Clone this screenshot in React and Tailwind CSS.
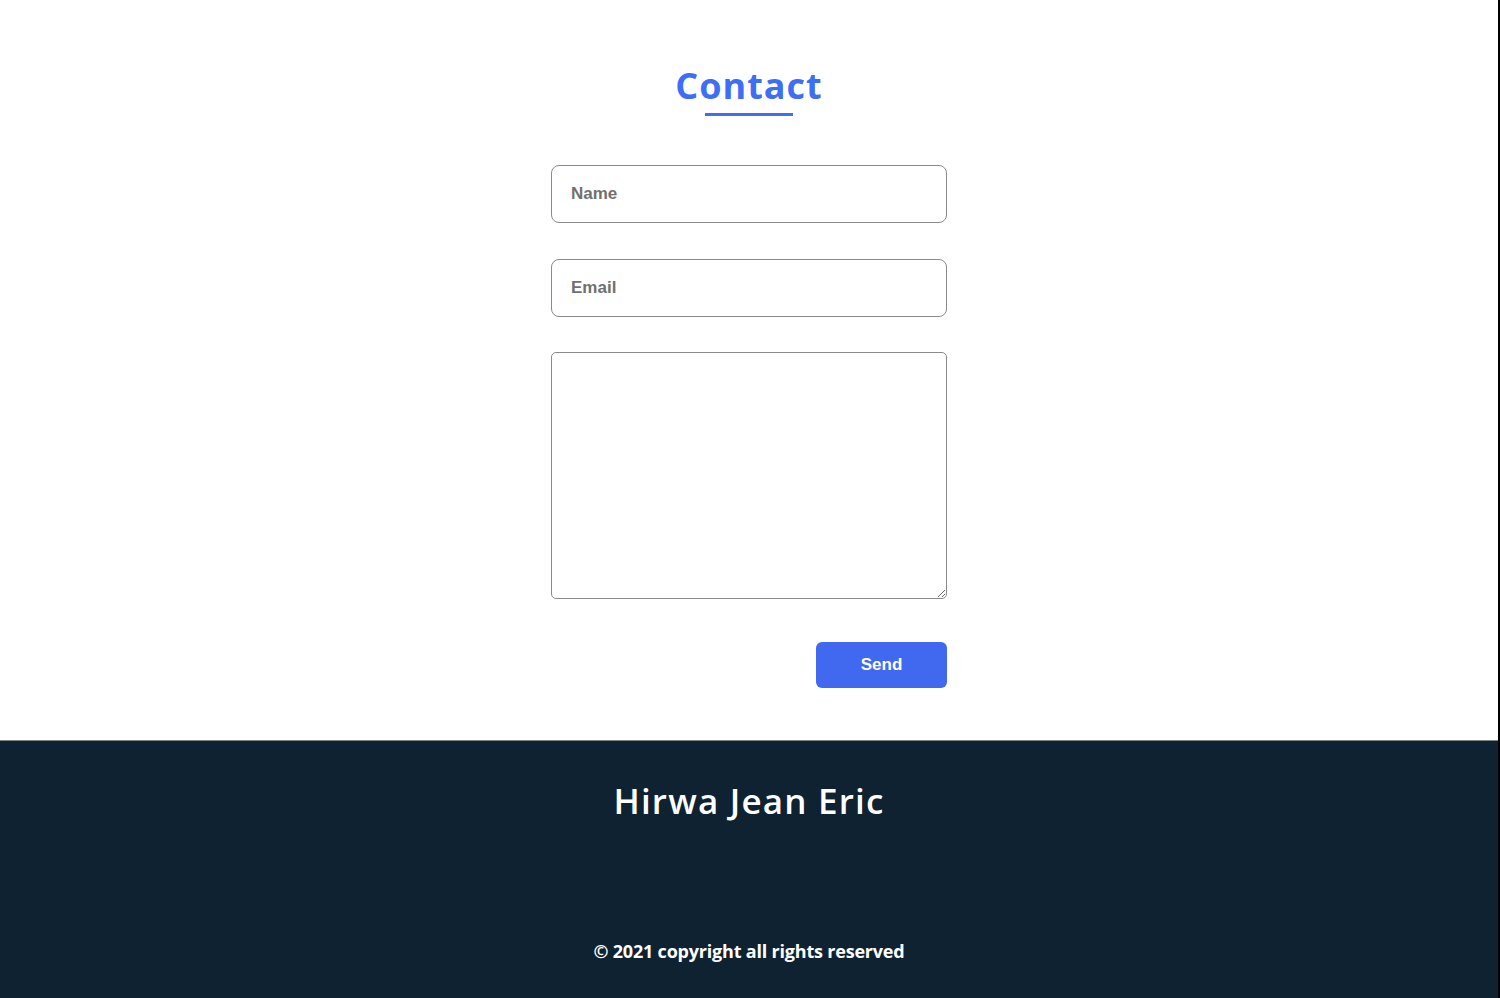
export default function App() {
  return (
    <div className="min-h-[998px] w-full bg-white flex flex-col border-r-2 border-black">
      <section className="flex flex-col items-center pt-[64px] h-[740px]">
        <h1 className="text-[36px] leading-[44px] font-bold text-[#3d6ef5] tracking-[1px]" style={{ fontFamily: '"Open Sans", sans-serif' }}>
          Contact
        </h1>
        <div className="w-[88px] h-[3px] bg-[#3d6ef5] mt-[5px]" />
        <form className="mt-[49px] w-[396px] flex flex-col" style={{ fontFamily: '"Liberation Sans", Arial, sans-serif' }} onSubmit={(e) => e.preventDefault()}>
          <input
            type="text"
            placeholder="Name"
            className="h-[58px] w-full rounded-[8px] border border-[#8a8a8a] px-[19px] text-[17px] font-bold placeholder:text-[#707070] outline-none"
          />
          <input
            type="email"
            placeholder="Email"
            className="mt-[36px] h-[58px] w-full rounded-[8px] border border-[#8a8a8a] px-[19px] text-[17px] font-bold placeholder:text-[#707070] outline-none"
          />
          <textarea
            className="mt-[35px] h-[247px] w-full rounded-[5px] border border-[#8a8a8a] px-[19px] py-3 text-[17px] outline-none"
          />
          <div className="flex justify-end mt-[43px]">
            <button
              type="submit"
              className="w-[131px] h-[46px] rounded-[6px] bg-[#4169ef] text-white text-[17px] font-bold"
            >
              Send
            </button>
          </div>
        </form>
      </section>
      <footer className="flex-1 bg-[#0f2231] border-t border-[#7a8580] flex flex-col items-center text-white" style={{ fontFamily: '"Open Sans", sans-serif' }}>
        <h2 className="mt-[38px] text-[35px] leading-[44px] font-semibold tracking-[1.2px]">Hirwa Jean Eric</h2>
        <p className="mt-[115px] text-[18px] leading-[26px] font-bold tracking-[-0.2px]">© 2021 copyright all rights reserved</p>
      </footer>
    </div>
  );
}
